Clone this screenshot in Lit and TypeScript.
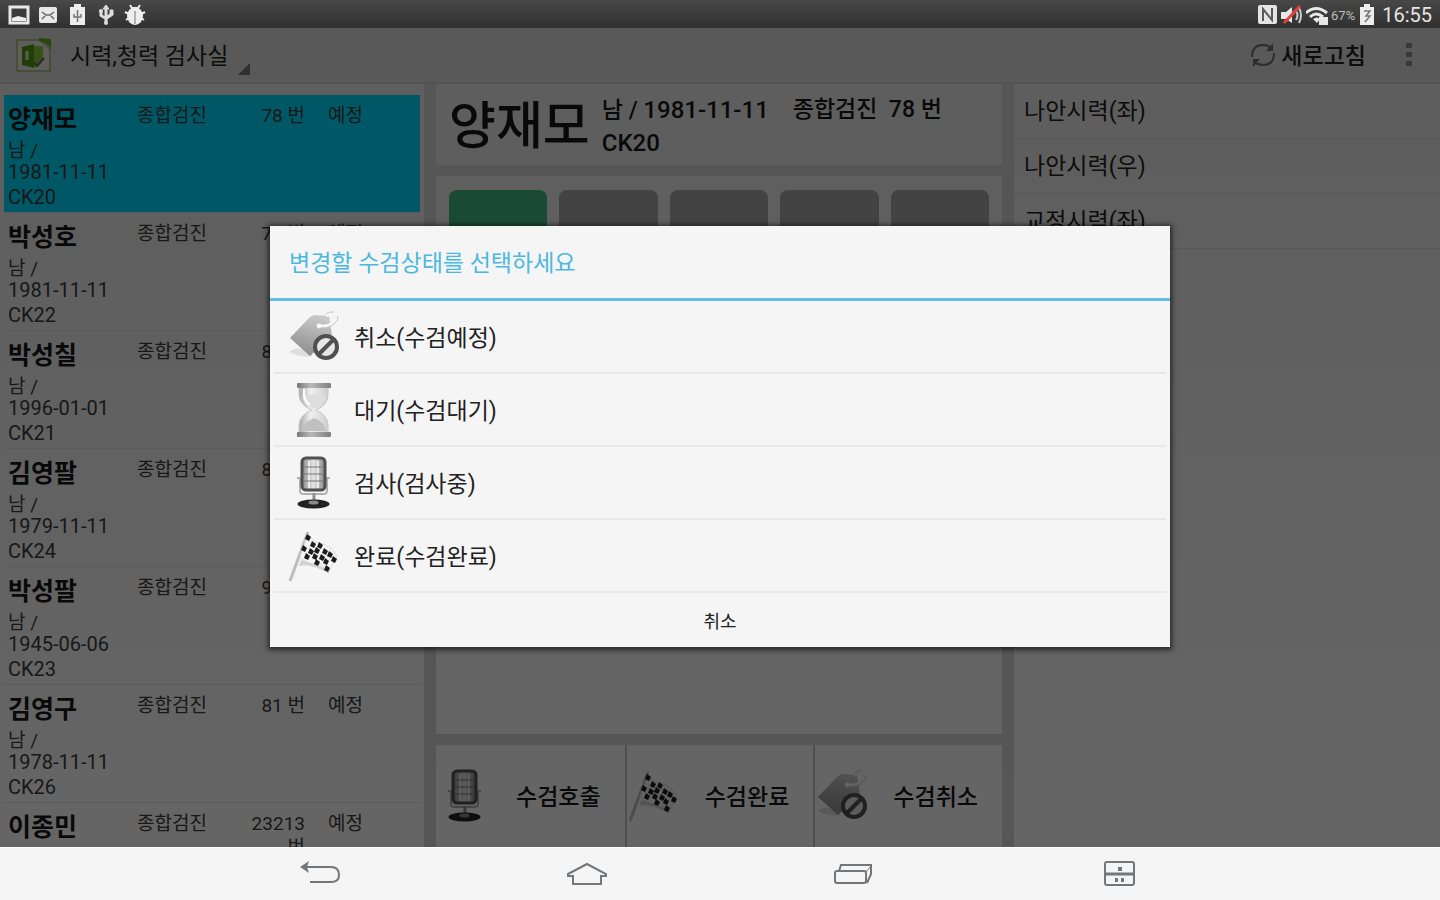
import { LitElement, html, css, svg } from "lit";
import { customElement } from "lit/decorators.js";
import { classMap } from "lit/directives/class-map.js";

type IconName = "tag" | "hourglass" | "mic" | "flag";

const tagIcon = () => html`<svg viewBox="0 0 54 56" aria-hidden="true">
  <defs>
    <linearGradient id="tag-body" x1="0.6" y1="0" x2="0.3" y2="1">
      <stop offset="0" stop-color="#c9c9c9" /><stop offset="1" stop-color="#8c8c8c" />
    </linearGradient>
  </defs>
  <path d="M2 43 Q8 38 16 40 L26 47 Q14 49 2 43Z" fill="#dedede" />
  <path d="M3 29 L22 9 Q25 6 28 6 L42 7 L45 26 L23 47 Z" fill="url(#tag-body)" />
  <path d="M32 16 Q38 19 46 14 Q52 9 48 6 Q44 4 39 7" fill="none" stroke="#f6f6f6" stroke-width="3" />
  <path d="M32 18 Q39 21 47 15 Q52 11 51 7 M47 3 Q43 2 39 5" fill="none" stroke="#c4c4c4" stroke-width="1" />
  <circle cx="32" cy="17" r="2.4" fill="#fafafa" />
  <circle cx="39" cy="38" r="11" fill="#e6e6e6" stroke="#505050" stroke-width="4" />
  <path d="M32 45 L46 31" stroke="#505050" stroke-width="4" />
</svg>`;

const hourglassIcon = () => html`<svg viewBox="0 0 54 56" aria-hidden="true">
  <defs>
    <linearGradient id="glass" x1="0" x2="1">
      <stop offset="0" stop-color="#a8a8a8" /><stop offset="0.4" stop-color="#f0f0f0" />
      <stop offset="1" stop-color="#cfcfcf" />
    </linearGradient>
    <linearGradient id="cap" x1="0" x2="1">
      <stop offset="0" stop-color="#777" /><stop offset="0.4" stop-color="#b8b8b8" />
      <stop offset="1" stop-color="#808080" />
    </linearGradient>
  </defs>
  <path d="M12 4 H41 V12 Q41 23 29 28 Q41 33 41 44 V52 H12 V44 Q12 33 25 28 Q12 23 12 12Z" fill="url(#glass)" stroke="#c6c6c6" />
  <path d="M15 14 Q27 11 39 14 Q38 22 28 26 H26 Q16 22 15 14Z" fill="#dedede" />
  <path d="M14 49 Q16 40 27 36 Q38 40 39 49Z" fill="#c0c0c0" />
  <path d="M17 7 V13 Q18 20 23 23" fill="none" stroke="#fff" stroke-width="2" />
  <rect x="10" y="1" width="34" height="5" rx="1" fill="url(#cap)" />
  <rect x="10" y="50" width="34" height="5" rx="1" fill="url(#cap)" />
</svg>`;

const micIcon = () => html`<svg viewBox="0 0 54 56" aria-hidden="true">
  <defs>
    <linearGradient id="mic-body" x1="0" x2="1">
      <stop offset="0" stop-color="#8a8a8a" /><stop offset="0.5" stop-color="#e4e4e4" />
      <stop offset="1" stop-color="#868686" />
    </linearGradient>
  </defs>
  <path d="M10 23 H43 M13 23 V36 Q13 39 17 39 H36 Q40 39 40 36 V23" fill="none" stroke="#b0b0b0" stroke-width="2" />
  <path d="M27 38 V49" stroke="#8e8e8e" stroke-width="3" />
  <ellipse cx="26.500" cy="49" rx="16" ry="4.500" fill="#232323" />
  <ellipse cx="26.500" cy="47.500" rx="5" ry="2" fill="#8a8a8a" />
  <rect x="15" y="3" width="23" height="32" rx="4" fill="url(#mic-body)" stroke="#505050" stroke-width="3" />
  <path d="M22 6 V33 M31 6 V33" stroke="#fff" stroke-width="2" opacity="0.7" />
  <path d="M17 12 H36 M17 19 H36 M17 26 H36" stroke="#777" stroke-width="1" />
</svg>`;

const checks = [
  [21, 10], [26, 17], [33, 18], [17, 21], [30, 23], [38, 24], [24, 24],
  [20, 29], [35, 30], [28, 29], [43, 27], [30, 35], [47, 32], [39, 34], [40, 41],
];

const flagIcon = () => html`<svg viewBox="0 0 54 56" aria-hidden="true">
  <path d="M3 53 L21 4" stroke="#bdbdbd" stroke-width="3" />
  <path d="M21 6 Q27 15 34 15 Q43 17 50 28 L42 44 Q36 35 28 36 Q19 36 13 29Z" fill="#f4f4f4" stroke="#dcdcdc" />
  <path d="M12 38 Q24 35 42 46 L41 41 Q28 36 14 32Z" fill="#d2d2d2" />
  ${checks.map(([x, y]) => svg`<path d="M${x - 1} ${y - 4} L${x + 3} ${y - 1} L${x + 1} ${y + 3} L${x - 3} ${y + 1}Z" fill="#1c1c1c" />`)}
</svg>`;

const icons: Record<IconName, () => unknown> = {
  tag: tagIcon,
  hourglass: hourglassIcon,
  mic: micIcon,
  flag: flagIcon,
};

const font = css`"Roboto", "Noto Sans CJK KR", sans-serif`;

interface Patient {
  name: string;
  birth: string;
  code: string;
  number: string;
}

const patients: Patient[] = [
  { name: "양재모", birth: "1981-11-11", code: "CK20", number: "78 번" },
  { name: "박성호", birth: "1981-11-11", code: "CK22", number: "79 번" },
  { name: "박성칠", birth: "1996-01-01", code: "CK21", number: "80 번" },
  { name: "김영팔", birth: "1979-11-11", code: "CK24", number: "82 번" },
  { name: "박성팔", birth: "1945-06-06", code: "CK23", number: "90 번" },
  { name: "김영구", birth: "1978-11-11", code: "CK26", number: "81 번" },
  { name: "이종민", birth: "", code: "", number: "23213 번" },
];

@customElement("status-bar")
class StatusBar extends LitElement {
  static styles = css`
    :host {
      display: flex;
      justify-content: space-between;
      align-items: center;
      height: 28px;
      padding: 0 8px;
      background: linear-gradient(#484848, #303030);
      color: #e6e6e6;
      font-family: ${font};
    }
    .group { display: flex; align-items: center; gap: 7px; padding-top: 2px; }
    .right { gap: 3px; }
    svg { display: block; width: 22px; height: 22px; }
    .percent { font-size: 13px; color: #bdbdbd; }
    .battery { width: 18px; }
    .clock { font-size: 20px; margin-left: 3px; }
  `;
  render() {
    return html`
      <div class="group">
        <svg viewBox="0 0 22 22"><rect x="2" y="3" width="18" height="16" fill="none" stroke="#e8e8e8" stroke-width="3" /><path d="M4 6 H18 V12 L14 10 L10 13 L4 14Z" fill="#3c3c3c" /><path d="M4 14 L10 12 L18 14 V17 H4Z" fill="#eee" /></svg>
        <svg viewBox="0 0 22 22"><rect x="2" y="3" width="18" height="16" rx="2" fill="#e8e8e8" /><path d="M5 8 L9 11 H13 L17 8 M5 15 L8 12 M17 15 L14 12" fill="none" stroke="#666" stroke-width="1.500" /></svg>
        <svg viewBox="0 0 22 22"><path d="M8 0 H15 V3 H19 V21 H4 V3 H8Z" fill="#ededed" /><path d="M11.500 6 V18 M8 10 V13 H15 V10" fill="none" stroke="#777" stroke-width="1.500" /></svg>
        <svg viewBox="0 0 22 22"><path d="M11 1 L14 5 H12 V12 L15 10 V6 H18 V11 L12 15 V18 H10 V15 L5 12 V7 H7 V11 L10 13 V5 H8Z" fill="#dedede" stroke="#dedede" /><circle cx="11" cy="19" r="2" fill="#dedede" /><circle cx="6" cy="7" r="2" fill="#dedede" /></svg>
        <svg viewBox="0 0 22 22"><path d="M6 1 L8 4 H14 L16 1 M1 8 L5 10 M21 8 L17 10 M2 16 L5 14 M20 16 L17 14" stroke="#eee" stroke-width="2" fill="none" /><ellipse cx="11" cy="12" rx="8" ry="9" fill="#eee" /><path d="M11 7 V20" stroke="#777" /></svg>
      </div>
      <div class="group right">
        <svg viewBox="0 0 22 22"><rect x="2" y="1" width="19" height="19" rx="2" fill="#e4e4e4" /><path d="M7 17 V5 L16 16 V4" fill="none" stroke="#585858" stroke-width="2" /></svg>
        <svg viewBox="0 0 22 22"><path d="M0 8 H5 L11 3 V19 L5 15 H0Z" fill="#e8e8e8" /><path d="M15 7 Q18 11 15 16 M18 4 Q22 11 18 19" fill="none" stroke="#ccc" stroke-width="2" /><path d="M3 19 L19 2" stroke="#e0433a" stroke-width="3" /></svg>
        <svg viewBox="0 0 22 22"><path d="M0 9 Q10 0 21 9 M4 13 Q10 7 17 13" fill="none" stroke="#e8e8e8" stroke-width="3" /><path d="M7 15 Q11 12 14 15 L11 19Z" fill="#e8e8e8" /><rect x="13" y="13" width="9" height="8" fill="#e8e8e8" /></svg>
        <span class="percent">67%</span>
        <svg class="battery" viewBox="2 0 18 22"><path d="M8 0 H14 V3 H18 V21 H4 V3 H8Z" fill="#ededed" /><path d="M8 7 H14 L10 12 H14 L9 18" fill="none" stroke="#777" stroke-width="1.500" /></svg>
        <span class="clock">16:55</span>
      </div>
    `;
  }
}

@customElement("action-bar")
class ActionBar extends LitElement {
  static styles = css`
    :host {
      display: flex;
      align-items: center;
      height: 54px;
      padding: 0 24px 0 16px;
      border-bottom: 2px solid #d0d0d0;
      background: #dedede;
      color: #222;
      font-family: ${font};
    }
    .logo { width: 36px; height: 36px; margin-right: 18px; }
    button {
      display: flex;
      align-items: center;
      border: 0;
      padding: 0;
      background: none;
      color: inherit;
      font: 500 23px/32px ${font};
    }
    button span { padding-top: 4px; }
    .room { font-weight: 400; }
    .room svg { width: 12px; height: 12px; margin: 28px 0 0 10px; }
    .refresh { margin-left: auto; gap: 5px; }
    .refresh svg { width: 26px; height: 28px; }
    .more { margin-left: 36px; }
    .more svg { width: 14px; height: 28px; }
  `;
  render() {
    return html`
      <svg class="logo" viewBox="0 0 36 36" aria-hidden="true">
        <path d="M1 3 H24 L34 12 V34 H1Z" fill="#eaeee4" stroke="#b0c48c" stroke-width="2" />
        <path d="M23 1 L35 2 V13 Q33 6 23 4Z" fill="#68b020" />
        <path d="M6 10 L18 7 V31 L6 28Z" fill="#4f9f10" /><path d="M18 9 H27 V23 L22 30 H18Z" fill="#8bc83a" />
        <path d="M18 25 L21 29 L28 21" fill="none" stroke="#666" stroke-width="2" />
        <path d="M11 14 V23" stroke="#d8eebc" stroke-width="3" />
      </svg>
      <button class="room"><span>시력,청력 검사실</span><svg viewBox="0 0 12 12" aria-hidden="true"><path d="M12 0 V12 H0Z" fill="#777" /></svg></button>
      <button class="refresh">
        <svg viewBox="0 0 26 28" aria-hidden="true"><path d="M2 16 Q2 4 13 4 Q18 4 21 7 M24 12 Q24 24 13 24 Q8 24 5 21" fill="none" stroke="#707070" stroke-width="2" /><path d="M23 2 V10 H16Z M3 26 V18 H10Z" fill="#707070" /></svg>
        <span>새로고침</span>
      </button>
      <button class="more" aria-label="더보기">
        <svg viewBox="0 0 14 28"><path d="M4 2 h6 v5 h-6z M4 11 h6 v5 h-6z M4 20 h6 v5 h-6z" fill="#909090" /></svg>
      </button>
    `;
  }
}

@customElement("patient-list")
class PatientList extends LitElement {
  static styles = css`
    :host { display: block; overflow: hidden; padding: 11px 4px 0; font-family: ${font}; color: #3c3c3c; }
    ul { list-style: none; margin: 0; padding: 0; }
    li {
      display: grid;
      grid-template-columns: 129px 80px 88px 1fr;
      height: 117px;
      padding: 0 4px;
      border-bottom: 1px solid #e2e2e2;
      font-size: 19px;
      line-height: 24px;
    }
    .selected { background: #00dcff; }
    .name { padding-top: 4px; font-size: 25px; font-weight: 700; line-height: 41px; color: #181818; }
    .sex { line-height: 22px; }
    .birth { font-size: 20px; line-height: 20px; }
    .code { font-size: 20px; line-height: 30px; }
    .cell { padding-top: 9px; }
    .number { text-align: right; padding-left: 24px; }
    .state { padding-left: 23px; }
  `;
  render() {
    return html`<ul>
      ${patients.map(
        (p, i) => html`<li class=${classMap({ selected: i === 0 })}>
          <div>
            <div class="name">${p.name}</div>
            ${p.birth
              ? html`<div class="sex">남 /</div>
                  <div class="birth">${p.birth}</div>
                  <div class="code">${p.code}</div>`
              : ""}
          </div>
          <div class="cell">종합검진</div>
          <div class="cell number">${p.number}</div>
          <div class="cell state">예정</div>
        </li>`
      )}
    </ul>`;
  }
}

@customElement("patient-detail")
class PatientDetail extends LitElement {
  static styles = css`
    :host {
      display: grid;
      grid-template-rows: 81px 1fr 102px;
      gap: 11px;
      font-family: ${font};
      color: #181818;
      background: var(--gutter);
    }
    .panel { background: var(--surface); background-attachment: fixed; }
    header { display: flex; align-items: center; gap: 12px; padding: 4px 13px 0; }
    h1 { margin: 0; font-size: 51px; line-height: 70px; font-weight: 500; }
    .facts { font-size: 23px; line-height: 32px; font-weight: 500; }
    .line { display: flex; gap: 24px; }
    .latin { font-size: 24px; }
    .slots { display: grid; grid-template-columns: repeat(5, 1fr); gap: 12px; padding: 14px 13px; align-content: start; }
    .slot { height: 110px; border-radius: 8px; background: #a8a8a8; }
    .active { background: #44b880; }
    footer { display: grid; grid-template-columns: repeat(3, 1fr); }
    button {
      display: flex;
      align-items: center;
      border: 0;
      padding: 0;
      border-left: 2px solid #c4c4c4;
      background: none;
      color: inherit;
      font: 500 23px/32px ${font};
    }
    button:first-child { border-color: transparent; }
    button svg { width: 54px; height: 56px; flex: none; }
    button span { flex: 1; padding-top: 4px; text-align: center; }
  `;
  render() {
    const actions: [IconName, string][] = [
      ["mic", "수검호출"],
      ["flag", "수검완료"],
      ["tag", "수검취소"],
    ];
    return html`
      <header class="panel">
        <h1>양재모</h1>
        <div class="facts">
          <div class="line"><span>남 / <span class="latin">1981-11-11</span></span><span>종합검진&nbsp; 78 번</span></div>
          <div class="latin">CK20</div>
        </div>
      </header>
      <section class="panel slots">
        ${[0, 1, 2, 3, 4].map((n) => html`<div class=${classMap({ slot: true, active: n === 0 })}></div>`)}
      </section>
      <footer class="panel">
        ${actions.map(([icon, label]) => html`<button>${icons[icon]()}<span>${label}</span></button>`)}
      </footer>
    `;
  }
}

@customElement("exam-list")
class ExamList extends LitElement {
  static styles = css`
    :host { display: block; font: 23px/52px ${font}; color: #222; }
    ul { list-style: none; margin: 0; padding: 0; }
    li { padding: 2px 10px 0; border-bottom: 1px solid #dadada; }
  `;
  render() {
    return html`<ul>
      ${["나안시력(좌)", "나안시력(우)", "교정시력(좌)"].map((t) => html`<li>${t}</li>`)}
    </ul>`;
  }
}

@customElement("state-dialog")
class StateDialog extends LitElement {
  static styles = css`
    :host {
      display: block;
      width: 62.5%;
      background: #f5f5f5;
      box-shadow: 0 1px 5px 2px rgba(0, 0, 0, 0.6);
      font-family: ${font};
      color: #222;
    }
    h2 {
      margin: 0;
      padding: 4px 19px 0;
      border-bottom: 3px solid #62bfe0;
      font-size: 23px;
      font-weight: 400;
      line-height: 68px;
      color: #4cb8e0;
    }
    ul { list-style: none; margin: 0; padding: 0 4px; }
    li { border-bottom: 2px solid #e8e8e8; }
    button { border: 0; background: none; color: inherit; font: 400 23px/32px ${font}; }
    .choice { display: flex; align-items: center; gap: 13px; width: 100%; height: 71px; padding: 0 13px; }
    .choice span { padding-top: 4px; }
    .choice svg { width: 54px; height: 56px; }
    .cancel { display: block; width: 100%; height: 54px; padding-top: 4px; font-size: 18px; }
  `;
  render() {
    const choices: [IconName, string][] = [
      ["tag", "취소(수검예정)"],
      ["hourglass", "대기(수검대기)"],
      ["mic", "검사(검사중)"],
      ["flag", "완료(수검완료)"],
    ];
    return html`
      <h2>변경할 수검상태를 선택하세요</h2>
      <ul>
        ${choices.map(([icon, label]) => html`<li><button class="choice">${icons[icon]()}<span>${label}</span></button></li>`)}
      </ul>
      <button class="cancel">취소</button>
    `;
  }
}

@customElement("nav-bar")
class NavBar extends LitElement {
  static styles = css`
    :host {
      display: flex;
      justify-content: center;
      height: 52px;
      border-top: 1px solid #fff;
      background: #f5f5f5;
    }
    button { flex: 0 0 18.5%; display: grid; place-items: center; border: 0; padding: 0; background: none; }
    svg { width: 44px; height: 28px; fill: none; stroke: #737779; stroke-width: 2; }
  `;
  render() {
    const items = [
      { label: "뒤로", art: svg`<path d="M8 7 H33 Q41 7 41 15 Q41 22 33 22 H12" /><path d="M2 7 L11 1 L9 7 L11 13Z" fill="#737779" stroke="none" />` },
      { label: "홈", art: svg`<path d="M3 14 L22 4 L41 14 V16 H36 V24 H8 V16 H3Z" />` },
      { label: "최근 앱", art: svg`<path d="M8 11 L10 5 H40 V14 L36 23" /><rect x="4" y="11" width="31" height="12" rx="2" /><path d="M35 12 L39 7" stroke-width="1" />` },
      { label: "서랍", art: svg`<rect x="7" y="2" width="29" height="23" rx="2" /><path d="M7 14 H36" stroke-width="3" /><path d="M20 9 H24 M17 20 H20 M23 20 H26" stroke-width="4" />` },
    ];
    return html`${items.map((i) => html`<button aria-label=${i.label}><svg viewBox="0 0 44 28">${i.art}</svg></button>`)}`;
  }
}

@customElement("app-root")
class AppRoot extends LitElement {
  static styles = css`
    :host {
      --gutter: #d8d8d8;
      --surface: linear-gradient(#e8e8e8, #ffffff);
      display: flex;
      flex-direction: column;
      height: 100vh;
      overflow: hidden;
    }
    .screen { position: relative; flex: 1; min-height: 0; display: flex; flex-direction: column; }
    .columns {
      flex: 1;
      min-height: 0;
      display: grid;
      grid-template-columns: 424fr 566fr 426fr;
      gap: 12px;
      background: var(--gutter);
    }
    .surface { background: var(--surface); background-attachment: fixed; min-height: 0; min-width: 0; }
    .scrim {
      position: absolute;
      inset: 0;
      display: flex;
      align-items: center;
      justify-content: center;
      padding-bottom: 2px;
      background: rgba(0, 0, 0, 0.6);
    }
  `;
  render() {
    return html`
      <status-bar></status-bar>
      <main class="screen">
        <action-bar></action-bar>
        <div class="columns">
          <patient-list class="surface"></patient-list>
          <patient-detail></patient-detail>
          <exam-list class="surface"></exam-list>
        </div>
        <div class="scrim"><state-dialog role="dialog" aria-modal="true"></state-dialog></div>
      </main>
      <nav-bar></nav-bar>
    `;
  }
}
